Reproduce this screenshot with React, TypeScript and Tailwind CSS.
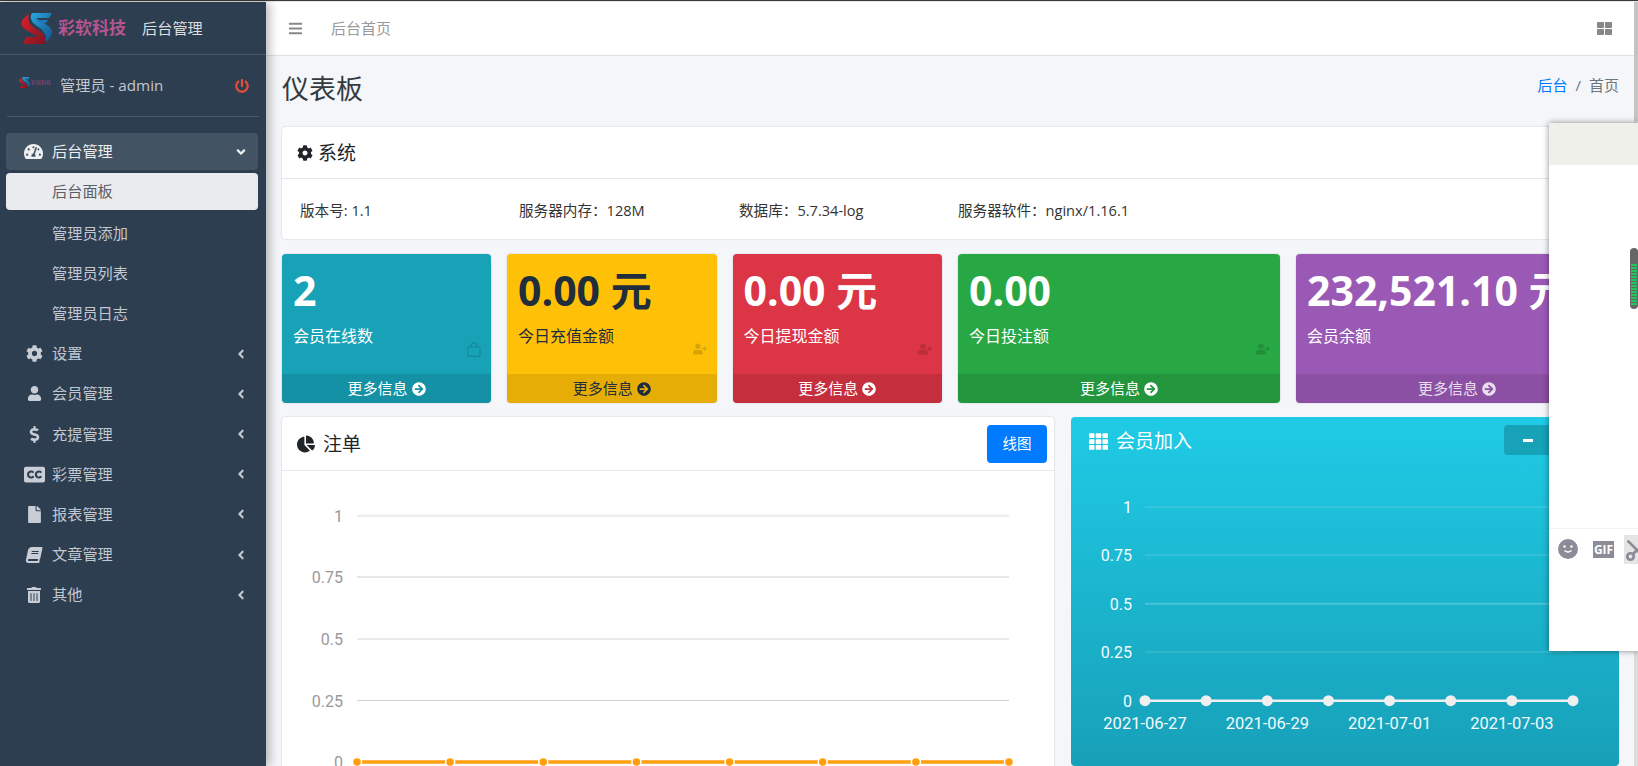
import {
  FaAngleDown,
  FaAngleLeft,
  FaArrowCircleRight,
  FaBars,
  FaBook,
  FaChartPie,
  FaClosedCaptioning,
  FaCog,
  FaDollarSign,
  FaFile,
  FaPowerOff,
  FaTachometerAlt,
  FaTh,
  FaThLarge,
  FaTrashAlt,
  FaUser,
  FaUserPlus,
} from 'react-icons/fa'
import { Scissors } from 'lucide-react'

function Logo({ small }: { small?: boolean }) {
  return (
    <svg viewBox="0 0 31 31" className={small ? 'w-[11px] h-[11px]' : 'w-[31px] h-[31px]'}>
      <defs>
        <linearGradient id={small ? 'rs' : 'rb'} x1="0" y1="0" x2="1" y2="1">
          <stop offset="0" stopColor="#e0202c" />
          <stop offset="1" stopColor="#7c1420" />
        </linearGradient>
        <linearGradient id={small ? 'bs' : 'bb'} x1="0" y1="0" x2="1" y2="1">
          <stop offset="0" stopColor="#28a8e0" />
          <stop offset="1" stopColor="#14508c" />
        </linearGradient>
      </defs>
      <path d="M8 1 C2 5 -1 9 1 13 C3 17 12 20 17 24 L5 24 L2 31 L24 31 C26 25 22 20 15 16 C10 13 6 10 8 1 Z" fill={`url(#${small ? 'rs' : 'rb'})`} />
      <path d="M11 0 L31 0 L28 5 L15 5 C19 8 30 13 31 18 C31 23 28 27 24 29 C27 21 22 17 16 13 C11 10 8 5 11 0 Z" fill={`url(#${small ? 'bs' : 'bb'})`} />
      <path d="M16 7 L27 7 L25 10 L20 10 Z" fill="#1f78b8" />
    </svg>
  )
}

const subItems = ['管理员添加', '管理员列表', '管理员日志']

const menuItems = [
  { label: '设置', icon: <FaCog size={17} /> },
  { label: '会员管理', icon: <FaUser size={15} /> },
  { label: '充提管理', icon: <FaDollarSign size={17} /> },
  { label: '彩票管理', icon: <FaClosedCaptioning size={21} /> },
  { label: '报表管理', icon: <FaFile size={17} /> },
  { label: '文章管理', icon: <FaBook size={16} className="-skew-x-12" /> },
  { label: '其他', icon: <FaTrashAlt size={16} /> },
]

function Sidebar() {
  return (
    <aside className="relative z-10 w-[266px] shrink-0 bg-[#2d3e50] shadow-[3px_0_10px_rgba(0,0,0,0.3)] text-[#c2c7d0] text-[15.2px]">
      <div className="h-[53px] flex items-center pl-[21px] border-b border-[#4b5866]">
        <Logo />
        <span className="ml-[6px] w-[84px] text-[17px] font-bold text-[#b4558f]">彩软科技</span>
        <span className="text-[#dcdfe2]">后台管理</span>
      </div>
      <div className="mx-[7px] h-[62px] flex items-center pl-[12px] pr-[10px] border-b border-[#4b5866]">
        <div className="w-[41px] flex items-center gap-[1px] -mt-[6px]">
          <Logo small />
          <span className="text-[5px] leading-none text-[#a0487f]">彩软科技</span>
        </div>
        <span>管理员 - admin</span>
        <FaPowerOff size={14} className="ml-auto text-[#e74c3c]" />
      </div>
      <nav className="mt-[16px] pl-[6px] pr-[8px]">
        <div className="h-[37px] flex items-center rounded bg-[#425363] text-[#eceef0] pl-[18px] pr-[10px]">
          <FaTachometerAlt size={19} className="text-[#f0f0f0]" />
          <span className="ml-[9px]">后台管理</span>
          <FaAngleDown size={14} className="ml-auto" />
        </div>
        <div className="mt-[3px] h-[37px] flex items-center rounded bg-[#e9ebee] text-[#5b6068] pl-[46px]">后台面板</div>
        <div className="mt-[3px]">
          {subItems.map(item => (
            <div key={item} className="h-[40.2px] flex items-center pl-[46px]">{item}</div>
          ))}
          {menuItems.map(item => (
            <div key={item.label} className="h-[40.2px] flex items-center pl-[16px] pr-[10px]">
              <span className="w-[24px] flex justify-center text-[#c9ced6]">{item.icon}</span>
              <span className="ml-[6px]">{item.label}</span>
              <FaAngleLeft size={14} className="ml-auto" />
            </div>
          ))}
        </div>
      </nav>
    </aside>
  )
}

function BagIcon() {
  return (
    <svg viewBox="0 0 14 15" className="w-[14px] h-[15px]" fill="none" stroke="currentColor" strokeWidth="1.2">
      <path d="M1 5 H13 V14.4 H1 Z" />
      <path d="M4.2 5 V3.2 C4.2 0 9.8 0 9.8 3.2 V5" />
    </svg>
  )
}

const stats = [
  {
    value: '2', label: '会员在线数', width: 'w-[209px]',
    card: 'bg-[#17a2b8] text-white', foot: 'text-white', corner: <BagIcon />,
  },
  {
    value: '0.00 元', label: '今日充值金额', width: 'w-[209.5px]',
    card: 'bg-[#ffc107] text-[#1f2d3d]', foot: 'text-[#1f2d3d]', corner: <FaUserPlus size={14} />,
  },
  {
    value: '0.00 元', label: '今日提现金额', width: 'w-[209.5px]',
    card: 'bg-[#dc3545] text-white', foot: 'text-white', corner: <FaUserPlus size={14} />,
  },
  {
    value: '0.00', label: '今日投注额', width: 'w-[322px]',
    card: 'bg-[#28a745] text-white', foot: 'text-white', corner: <FaUserPlus size={14} />,
  },
  {
    value: '232,521.10 元', label: '会员余额', width: 'w-[322px]',
    card: 'bg-[#9b59b6] text-white', foot: 'text-white/80', corner: null,
  },
]

function StatCard({ stat }: { stat: (typeof stats)[number] }) {
  return (
    <div className={`relative h-[149px] rounded flex flex-col overflow-hidden shadow-[0_0_2px_rgba(0,0,0,0.2)] ${stat.width} ${stat.card}`}>
      <div className="flex-1 px-[11px] pt-[10px]">
        <div className="text-[41px] leading-[52px] font-bold whitespace-nowrap">{stat.value}</div>
        <div className="mt-[8px] text-[16px] leading-[24px]">{stat.label}</div>
      </div>
      <div className="absolute right-[10px] top-[88px] text-black/15">{stat.corner}</div>
      <div className={`h-[29px] bg-black/10 flex items-center justify-center gap-[4px] text-[15px] ${stat.foot}`}>
        更多信息 <FaArrowCircleRight size={14} />
      </div>
    </div>
  )
}

const yTicks = ['1', '0.75', '0.5', '0.25', '0']

function OrderChart() {
  const ys = [515.7, 577, 639, 700.5, 762]
  const xs = Array.from({ length: 8 }, (_, i) => 357 + i * 93.14)
  return (
    <svg viewBox="282 471 772 296" width={772} height={296} className="block font-['Roboto',sans-serif]">
      {ys.map((y, i) => (
        <g key={y}>
          <line x1={357} x2={1009} y1={y} y2={y} stroke={i % 2 ? '#cfcfcf' : '#ebebeb'} strokeWidth={i % 2 ? 1 : 2} />
          <text x={343} y={y + 6} textAnchor="end" fontSize={16} fill="#999">{yTicks[i]}</text>
        </g>
      ))}
      <line x1={357} x2={1009} y1={762} y2={762} stroke="#ff9f10" strokeWidth={3.5} />
      {xs.map(x => (
        <circle key={x} cx={x} cy={762} r={4.5} fill="#ff9f10" stroke="#fff" strokeWidth={1.5} />
      ))}
    </svg>
  )
}

function JoinChart() {
  const ys = [507, 555, 603.7, 652, 700.7]
  const xs = Array.from({ length: 8 }, (_, i) => 1145 + i * 61.14)
  const dates = ['2021-06-27', '2021-06-29', '2021-07-01', '2021-07-03']
  return (
    <svg viewBox="1071 470 548 296" width={548} height={296} className="block font-['Roboto',sans-serif]">
      {ys.map((y, i) => (
        <g key={y}>
          <line x1={1145} x2={1573} y1={y} y2={y} stroke="#ffffff" strokeOpacity={0.2} strokeWidth={i === 2 ? 2 : 1} />
          <text x={1132} y={y + 6} textAnchor="end" fontSize={16} fill="#f4fbfd">{yTicks[i]}</text>
        </g>
      ))}
      <line x1={1145} x2={1573} y1={700.7} y2={700.7} stroke="#efefef" strokeWidth={2.5} />
      {xs.map(x => (
        <circle key={x} cx={x} cy={700.7} r={5.5} fill="#efefef" />
      ))}
      {dates.map((d, i) => (
        <text key={d} x={1145 + i * 122.3} y={729} textAnchor="middle" fontSize={16.5} fill="#f4fbfd">{d}</text>
      ))}
    </svg>
  )
}

const meterBars = Array.from({ length: 14 }, (_, i) => i)

// floating chat window that sits over the page
function ChatWindow() {
  return (
    <div className="absolute left-[1549px] top-[123px] z-20 w-[89px] h-[528px] bg-white shadow-[0_0_6px_rgba(0,0,0,0.45)] flex flex-col overflow-hidden">
      <div className="h-[42px] bg-[#f0f0ea]" />
      <div className="relative h-[363px]">
        <div className="absolute left-[81px] top-[83px] w-[8px] h-[61px] rounded-full bg-[#666] flex flex-col justify-end gap-[1px] px-[1px] pb-[4px]">
          {meterBars.map(i => (
            <div key={i} className="h-[2px] bg-[#22c55e]" />
          ))}
        </div>
      </div>
      <div className="border-t border-[#f3f3f3] flex items-start pl-[9px] pt-[6px]">
        <svg viewBox="0 0 20 20" className="mt-[4px] w-[20px] h-[20px]">
          <circle cx="10" cy="10" r="10" fill="#8c8c99" />
          <circle cx="6.5" cy="7.5" r="1.2" fill="#fff" />
          <circle cx="13.5" cy="7.5" r="1.2" fill="#fff" />
          <path d="M6.5 11.5 Q10 14.5 13.5 11.5" stroke="#fff" strokeWidth="1.5" fill="none" />
        </svg>
        <div className="ml-[15px] mt-[6px] w-[21px] h-[17px] bg-[#8c8c99] text-white text-[12px] font-bold leading-[17px] text-center">GIF</div>
        <div className="ml-[10px] w-[14px] h-[29px] bg-[#e5e5e5] overflow-hidden flex items-center">
          <Scissors size={26} strokeWidth={2.5} className="shrink-0 text-[#8c8c99] -rotate-90" />
        </div>
      </div>
    </div>
  )
}

export default function App() {
  return (
    <div className="relative w-[1638px] h-[766px] overflow-hidden font-['Open_Sans','Noto_Sans_CJK_SC',sans-serif] flex flex-col bg-[#f4f6f9]">
      <div className="h-[1px] bg-[#3a3a36] shrink-0" />
      <div className="h-[1px] bg-[#e8e8e8] shrink-0" />
      <div className="flex flex-1 min-h-0">
        <Sidebar />
        <main className="flex-1 min-w-0 overflow-hidden">
          <header className="h-[54px] bg-white border-b border-[#dee2e6] flex items-center pl-[22px] pr-[22px] text-[15px] text-[#999]">
            <FaBars size={15} className="text-[#888]" />
            <span className="ml-[28px]">后台首页</span>
            <FaThLarge size={15} className="ml-auto text-[#888]" />
          </header>
          <div className="pl-[16px] pr-[15px]">
            <div className="h-[71px] flex items-center justify-between">
              <h1 className="text-[27px] text-[#343a40] pb-[5px]">仪表板</h1>
              <div className="text-[15px] text-[#6c757d] pb-[13px]">
                <span className="text-[#007bff]">后台</span>
                <span className="mx-[8px]">/</span>
                首页
              </div>
            </div>
            <section className="h-[112px] bg-white rounded shadow-[0_0_2px_rgba(0,0,0,0.2)]">
              <div className="h-[52px] border-b border-[#e5e7ea] flex items-center pl-[15px] pt-[1px] text-[19px] text-[#212529] gap-[5px]">
                <FaCog size={16} />
                系统
              </div>
              <div className="h-[60px] flex items-center pl-[18px] pt-[3px] text-[14.6px] text-[#333]">
                <span className="w-[219px]">版本号: 1.1</span>
                <span className="w-[220px]">服务器内存：128M</span>
                <span className="w-[219px]">数据库：5.7.34-log</span>
                <span>服务器软件：nginx/1.16.1</span>
              </div>
            </section>
            <div className="mt-[15px] flex gap-[16px]">
              {stats.map(stat => (
                <StatCard key={stat.label} stat={stat} />
              ))}
            </div>
            <div className="mt-[14px] flex gap-[17px]">
              <section className="w-[772px] shrink-0 h-[360px] bg-white rounded shadow-[0_0_2px_rgba(0,0,0,0.2)]">
                <div className="h-[54px] border-b border-[#e5e7ea] flex items-center justify-between pl-[15px] pr-[7px] text-[19px] text-[#212529]">
                  <span className="flex items-center gap-[8px] pt-[1px]">
                    <FaChartPie size={18} />
                    注单
                  </span>
                  <button className="w-[60px] h-[38px] rounded bg-[#007bff] text-white text-[14.5px]">线图</button>
                </div>
                <OrderChart />
              </section>
              <section className="w-[548px] shrink-0 h-[349px] rounded bg-linear-to-b from-[#20cbe6] to-[#17a0b8] text-white">
                <div className="h-[53px] flex items-start justify-between pl-[18px] pr-[10px] pt-[8px]">
                  <span className="flex items-center gap-[8px] text-[19px] leading-[32px]">
                    <FaTh size={19} />
                    会员加入
                  </span>
                  <div className="flex gap-[1px]">
                    <button className="w-[48px] h-[30px] rounded-l bg-[#17a2b8] flex items-center justify-center">
                      <span className="w-[10px] h-[3px] bg-white" />
                    </button>
                    <button className="w-[56px] h-[30px] rounded-r bg-[#17a2b8]" />
                  </div>
                </div>
                <JoinChart />
              </section>
            </div>
          </div>
        </main>
        <div className="w-[4px] shrink-0 flex flex-col">
          <div className="h-[119px] bg-[#c4c4c4]" />
          <div className="flex-1 bg-[#dcdcdc]" />
        </div>
      </div>
      <ChatWindow />
    </div>
  )
}
